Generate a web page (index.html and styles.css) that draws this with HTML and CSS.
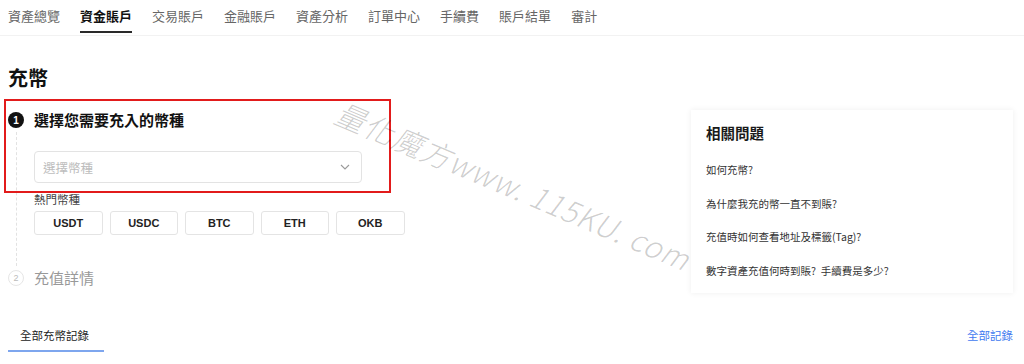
FILE: index.html
```html
<!DOCTYPE html>
<html lang="zh-Hant">
<head>
<meta charset="utf-8">
<title>充幣</title>
<link rel="stylesheet" href="styles.css">
</head>
<body>
<nav class="topnav">
  <a class="nav-item">資產總覽</a>
  <a class="nav-item active">資金賬戶</a>
  <a class="nav-item">交易賬戶</a>
  <a class="nav-item">金融賬戶</a>
  <a class="nav-item">資產分析</a>
  <a class="nav-item">訂單中心</a>
  <a class="nav-item">手續費</a>
  <a class="nav-item">賬戶結單</a>
  <a class="nav-item">審計</a>
</nav>

<main class="page">
  <h1 class="page-title">充幣</h1>
  <div class="content">
    <section class="steps">
      <div class="step step-active">
        <div class="mark-box"></div>
        <div class="step-head">
          <span class="step-num num-on">1</span>
          <h2 class="step-title">選擇您需要充入的幣種</h2>
        </div>
        <div class="step-body">
          <div class="select">
            <span class="placeholder">選擇幣種</span>
            <svg class="chevron" width="10" height="6" viewBox="0 0 10 6"><path d="M1 1l4 4 4-4" fill="none" stroke="#9a9a9a" stroke-width="1.1"/></svg>
          </div>
          <div class="hot-label">熱門幣種</div>
          <div class="coins">
            <button class="coin">USDT</button>
            <button class="coin">USDC</button>
            <button class="coin">BTC</button>
            <button class="coin">ETH</button>
            <button class="coin">OKB</button>
          </div>
        </div>
      </div>
      <div class="step">
        <div class="step-head">
          <span class="step-num num-off">2</span>
          <h2 class="step-title title-off">充值詳情</h2>
        </div>
      </div>
    </section>
    <aside class="faq">
      <h3 class="faq-title">相關問題</h3>
      <a class="faq-item">如何充幣?</a>
      <a class="faq-item">為什麼我充的幣一直不到賬?</a>
      <a class="faq-item">充值時如何查看地址及標籤(Tag)?</a>
      <a class="faq-item">數字資產充值何時到賬?&nbsp; 手續費是多少?</a>
    </aside>
  </div>
  <div class="records">
    <span class="rec-tab">全部充幣記錄</span>
    <a class="rec-all">全部記錄</a>
  </div>
</main>

<div class="watermark">量化魔方www. 115KU. com</div>
</body>
</html>
```

FILE: styles.css
```css
* { box-sizing: border-box; }
html, body { margin: 0; padding: 0; background: #fff; }
body {
  font-family: "Noto Sans CJK TC", "Noto Sans", sans-serif;
  color: #1e1e1e;
  position: relative;
  width: 1024px;
  height: 364px;
  overflow: hidden;
}

.topnav {
  display: flex;
  gap: 20px;
  padding-left: 8px;
  height: 36px;
  border-bottom: 1px solid #f2f2f2;
}
.nav-item {
  font-size: 13px;
  color: #666;
  line-height: 31px;
  height: 33px;
  white-space: nowrap;
  border-bottom: 2px solid transparent;
}
.nav-item.active {
  color: #111;
  font-weight: 700;
  border-bottom-color: #2a2a2a;
}

.page { padding: 0 11px 0 8px; }
.page-title {
  margin: 28px 0 0;
  font-size: 20px;
  line-height: 28px;
  font-weight: 700;
  color: #111;
}

.content {
  display: flex;
  margin-top: 16px;
}
.steps { flex: 1; }

.step { position: relative; }
.mark-box {
  position: absolute;
  left: -4px;
  top: -9px;
  width: 387px;
  height: 94px;
  border: 2px solid #e21b1b;
  pointer-events: none;
}
.step-head {
  display: flex;
  align-items: center;
  gap: 10px;
  height: 24px;
}
.step-num {
  width: 16px;
  height: 16px;
  border-radius: 50%;
  display: flex;
  align-items: center;
  justify-content: center;
  font-family: "Liberation Sans", Arial, sans-serif;
  flex: none;
}
.num-on { background: #111; color: #fff; font-size: 10px; font-weight: 700; }
.num-off { border: 1px solid #e6e6e6; color: #bbb; font-size: 9px; }
.step-title {
  margin: 0;
  font-size: 15px;
  font-weight: 700;
  color: #111;
  line-height: 24px;
}
.title-off { font-weight: 400; color: #999; }

.step-body {
  margin-left: 8px;
  border-left: 1px dashed #e2e2e2;
  padding: 19px 0 31px 17px;
}
.select {
  width: 328px;
  height: 32px;
  border: 1px solid #e3e3e3;
  border-radius: 4px;
  display: flex;
  align-items: center;
  justify-content: space-between;
  padding: 0 11px 0 8px;
}
.placeholder { font-size: 12.5px; color: #bdbdbd; }
.hot-label {
  margin-top: 8px;
  font-size: 11.5px;
  line-height: 17px;
  color: #444;
}
.coins {
  display: flex;
  gap: 7px;
  margin-top: 3px;
}
.coin {
  width: 68.5px;
  height: 24px;
  border: 1px solid #e4e4e4;
  border-radius: 3px;
  background: #fff;
  font-family: "Liberation Sans", Arial, sans-serif;
  font-size: 11px;
  font-weight: 700;
  color: #222;
  padding: 0;
}

.faq {
  width: 322px;
  align-self: flex-start;
  margin-top: 2px;
  padding: 11px 15px 6px;
  box-shadow: 0 0 6px rgba(0,0,0,0.07);
  display: flex;
  flex-direction: column;
}
.faq-title {
  margin: 0 0 8px;
  font-size: 14.5px;
  font-weight: 700;
  line-height: 24px;
  color: #1a1a1a;
}
.faq-item {
  display: block;
  font-size: 10.5px;
  line-height: 33.5px;
  color: #333;
}

.records {
  display: flex;
  justify-content: space-between;
  align-items: flex-start;
  margin-top: 34px;
}
.rec-tab {
  font-size: 11.5px;
  line-height: 16px;
  padding: 0 15px 7px 12px;
  color: #222;
  border-bottom: 2px solid #7ea6ee;
}
.rec-all {
  font-size: 11.5px;
  line-height: 16px;
  color: #3f7af0;
}

.watermark {
  position: absolute;
  left: 346px;
  top: 90px;
  transform: rotate(23deg);
  transform-origin: left top;
  font-size: 30px;
  font-style: italic;
  font-weight: 300;
  letter-spacing: 1px;
  color: rgba(0,0,0,0.2);
  white-space: nowrap;
  pointer-events: none;
}
```
